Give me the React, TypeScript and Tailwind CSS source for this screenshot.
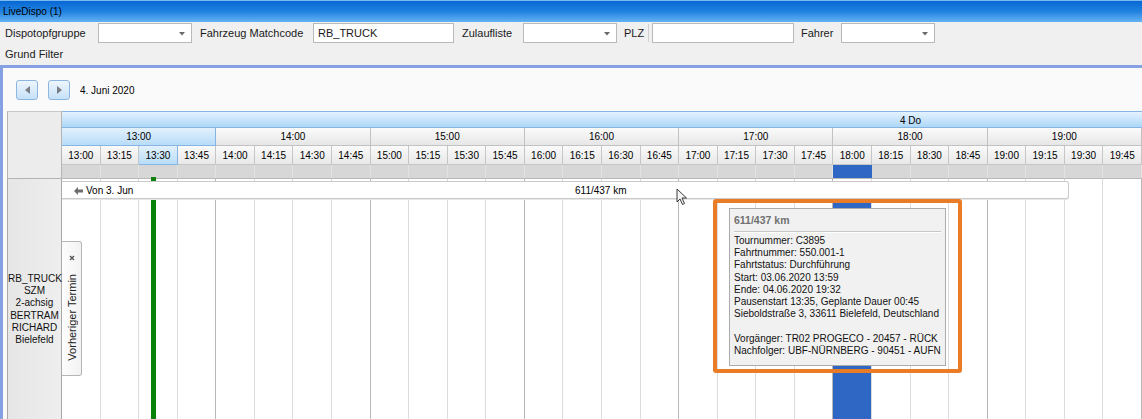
import React from 'react';

const hours = ['13:00', '14:00', '15:00', '16:00', '17:00', '18:00', '19:00'];
const quarters = [13, 14, 15, 16, 17, 18, 19].flatMap((h) => ['00', '15', '30', '45'].map((m) => `${h}:${m}`));

const DropArrow = () => (
  <svg width="6" height="4" viewBox="0 0 6 4" className="absolute right-[6px] top-[8px]">
    <polygon points="0,0 6,0 3,3.5" fill="#6a6a6a" />
  </svg>
);

const Combo = ({ w }: { w: string }) => (
  <div className={`relative h-[20px] bg-white border border-[#b9b9b9] ${w}`}>
    <DropArrow />
  </div>
);

const NavButton = ({ dir }: { dir: 'left' | 'right' }) => (
  <div className="w-[22px] h-[20px] rounded-[3px] border border-[#8cb6e2] bg-linear-to-b from-[#eef6fe] to-[#c6e1f8] flex items-center justify-center">
    <svg width="5" height="8" viewBox="0 0 5 8">
      {dir === 'left' ? <polygon points="5,0 5,8 0,4" fill="#7a7f86" /> : <polygon points="0,0 0,8 5,4" fill="#7a7f86" />}
    </svg>
  </div>
);

const tooltipLines = [
  'Tournummer: C3895',
  'Fahrtnummer: 550.001-1',
  'Fahrtstatus: Durchführung',
  'Start: 03.06.2020 13:59',
  'Ende: 04.06.2020 19:32',
  'Pausenstart 13:35, Geplante Dauer 00:45',
  'Sieboldstraße 3, 33611 Bielefeld, Deutschland',
];

export default function App() {
  return (
    <div className="w-[1142px] h-[419px] overflow-hidden bg-[#f0f0f0] font-['Liberation_Sans',Arial,sans-serif] text-black flex flex-col">
      {/* title bar */}
      <div className="h-[22px] shrink-0 border-t border-[#7ab8f2] bg-linear-to-b from-[#0868d4] via-[#1f82e0] to-[#62b2f3] flex items-center pl-[3px] text-[10px]">
        LiveDispo (1)
      </div>

      {/* filter row */}
      <div className="h-[22px] shrink-0 flex items-center text-[11px] text-[#1a1a1a]">
        <span className="ml-[5px] w-[93px]">Dispotopfgruppe</span>
        <Combo w="w-[94px]" />
        <span className="ml-[8px] w-[113px]">Fahrzeug Matchcode</span>
        <div className="h-[20px] w-[141px] bg-white border border-[#b9b9b9] pl-[4px] text-[11px] flex items-center">RB_TRUCK</div>
        <span className="ml-[8px] w-[61px]">Zulaufliste</span>
        <Combo w="w-[94px]" />
        <span className="ml-[7px] w-[24px]">PLZ</span>
        <div className="w-px h-[18px] bg-[#d0d0d0]" />
        <div className="ml-[3px] h-[20px] w-[142px] bg-white border border-[#b9b9b9]" />
        <span className="ml-[7px] w-[40px]">Fahrer</span>
        <Combo w="w-[94px]" />
      </div>
      <div className="h-[21px] shrink-0 flex items-center pl-[5px] text-[11px] text-[#1a1a1a]">Grund Filter</div>

      {/* main panel */}
      <div className="flex-1 border-t-[3px] border-l-[3px] border-[#86a1e3] bg-[#fafafa] flex flex-col min-h-0">
        <div className="h-[43px] shrink-0 flex items-start pt-[12px] pl-[13px]">
          <NavButton dir="left" />
          <div className="ml-[10px]">
            <NavButton dir="right" />
          </div>
          <span className="ml-[10px] mt-[3px] text-[10px]">4. Juni 2020</span>
        </div>

        <div className="flex-1 flex pl-[4px] min-h-0">
          {/* resource column */}
          <div className="w-[55px] shrink-0 flex flex-col">
            <div className="h-[68px] shrink-0 bg-[#ececec] border border-[#b4b4b4] border-t-[#c8c8c8]" />
            <div className="flex-1 bg-linear-to-r from-[#e6e6e6] to-[#eeeeee] border-l border-r border-[#a9a9a9] pt-[94px] text-[10px] leading-[12.2px] text-center text-[#111]">
              <div>RB_TRUCK</div>
              <div>SZM</div>
              <div>2-achsig</div>
              <div>BERTRAM</div>
              <div>RICHARD</div>
              <div>Bielefeld</div>
            </div>
          </div>

          {/* timeline */}
          <div className="w-[1080px] shrink-0 flex flex-col">
            <div className="h-[17px] shrink-0 relative border-t border-b border-[#86b4e3] bg-linear-to-b from-[#e4f2fe] to-[#add7f8]">
              <span className="absolute left-[838px] top-[1px] text-[10px]">4 Do</span>
            </div>
            <div className="h-[18px] shrink-0 grid grid-cols-7">
              {hours.map((h, i) => (
                <div
                  key={h}
                  className={
                    i === 0
                      ? 'border-r border-b border-[#85b5e4] bg-linear-to-b from-[#e3f1fd] to-[#b8dcf8] flex items-center justify-center text-[10px]'
                      : 'border-r border-b border-[#c2c2c2] bg-linear-to-b from-[#fbfbfb] to-[#e6e6e6] flex items-center justify-center text-[10px]'
                  }
                >
                  {h}
                </div>
              ))}
            </div>
            <div className="h-[19px] shrink-0 grid grid-cols-[repeat(28,minmax(0,1fr))]">
              {quarters.map((q, i) => (
                <div
                  key={q}
                  className={
                    i === 2
                      ? 'border-r border-b border-[#85b5e4] bg-linear-to-b from-[#e3f1fd] to-[#b8dcf8] flex items-center justify-center text-[10px]'
                      : 'border-r border-b border-[#c6c6c6] bg-linear-to-b from-[#fafafa] to-[#e8e8e8] flex items-center justify-center text-[10px]'
                  }
                >
                  {q}
                </div>
              ))}
            </div>
            <div className="h-[14px] shrink-0 grid grid-cols-[repeat(28,minmax(0,1fr))] bg-[#d7d7d7] border-b border-[#b8b8b8]">
              {quarters.map((q, i) => (
                <div key={q} className={i === 20 ? 'bg-[#2f67c5]' : 'border-r border-[#e2e2e2]'} />
              ))}
            </div>

            {/* body canvas */}
            <div className="flex-1 relative bg-white">
              <div className="absolute inset-0 grid grid-cols-[repeat(28,minmax(0,1fr))]">
                {quarters.map((q, i) => (
                  <div key={q} className={i % 4 === 3 ? 'border-r border-[#b8b8b8]' : 'border-r border-[#dcdcdc]'} />
                ))}
              </div>

              {/* pause marker */}
              <div className="absolute left-[89px] top-[-2px] bottom-0 w-[5px] bg-[#0a820a]" />
              {/* current slot */}
              <div className="absolute left-[771px] top-[20px] bottom-0 w-[38px] bg-[#2f67c5]" />

              {/* tour bar */}
              <div className="absolute left-0 top-[2px] w-[1007px] h-[18px] bg-white border border-l-0 border-[#cacaca] rounded-r-[3px] shadow-[0_1px_0_#e6e6e6] text-[10px]">
                <div className="absolute left-[12px] top-[3px] flex items-center">
                  <svg width="9" height="8" viewBox="0 0 9 8">
                    <polygon points="0,4 4,0 4,2.5 9,2.5 9,5.5 4,5.5 4,8" fill="#6d6d6d" />
                  </svg>
                  <span className="ml-[3px] leading-[12px]">Von 3. Jun</span>
                </div>
                <span className="absolute left-[513px] top-[3px] leading-[12px]">611/437 km</span>
              </div>

              {/* previous appointment tab */}
              <div className="absolute left-0 top-[62px] w-[20px] h-[135px] bg-linear-to-r from-[#fdfdfd] to-[#f2f2f2] border border-l-0 border-[#b5b5b5] rounded-r-[3px] flex flex-col items-center pt-[13px]">
                <svg width="6" height="6" viewBox="0 0 6 6">
                  <path d="M1 1 L5 5 M5 1 L1 5" stroke="#555" strokeWidth="1.4" />
                </svg>
                <span className="mt-[13px] [writing-mode:vertical-rl] rotate-180 text-[11px] text-[#222] leading-[12px]">Vorheriger Termin</span>
              </div>

              {/* tooltip */}
              <div className="absolute left-[667px] top-[29px] w-[217px] h-[158px] bg-[#f1f1f1] border border-[#ababab] px-[4px] text-[10px] leading-[12.2px] text-[#111]">
                <div className="pt-[5px] font-bold text-[10.5px] text-[#707070] leading-[12px]">611/437 km</div>
                <div className="mt-[5px] border-t border-[#c6c6c6] border-b border-b-white" />
                <div className="mt-[2px]">
                  {tooltipLines.map((l) => (
                    <div key={l}>{l}</div>
                  ))}
                  <div className="h-[12.2px]" />
                  <div>Vorgänger: TR02 PROGECO - 20457 - RÜCK</div>
                  <div>Nachfolger: UBF-NÜRNBERG - 90451 - AUFN</div>
                </div>
              </div>

              {/* annotation frame */}
              <div className="absolute left-[651px] top-[20px] w-[249px] h-[174px] border-[4px] border-[#ea7b27] rounded-[3px]" />

              {/* mouse pointer */}
              <svg className="absolute left-[614px] top-[9px]" width="12" height="18" viewBox="0 0 12 18">
                <path d="M1 1 L1 14 L4 11 L6.5 16.5 L8.5 15.5 L6 10 L10.5 10 Z" fill="#f4f4f4" stroke="#3a3a3a" strokeWidth="1" strokeLinejoin="round" />
              </svg>
            </div>
          </div>
        </div>
      </div>
    </div>
  );
}
